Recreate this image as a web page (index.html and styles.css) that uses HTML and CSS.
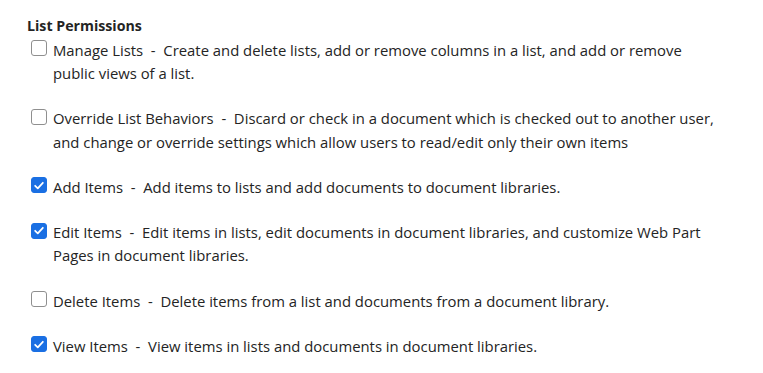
FILE: index.html
```html
<!DOCTYPE html>
<html lang="en">
<head>
<meta charset="utf-8">
<title>List Permissions</title>
<link rel="stylesheet" href="styles.css">
</head>
<body>
<section class="group">
  <h3 class="group-title">List Permissions</h3>
  <ul class="perm-list">
    <li class="perm">
      <span class="box"></span>
      <span class="perm-text">Manage Lists&nbsp; -&nbsp; Create and delete lists, add or remove columns in a list, and add or remove public views of a list.</span>
    </li>
    <li class="perm">
      <span class="box"></span>
      <span class="perm-text">Override List Behaviors&nbsp; -&nbsp; Discard or check in a document which is checked out to another user, and change or override settings which allow users to read/edit only their own items</span>
    </li>
    <li class="perm">
      <span class="box checked"><svg viewBox="0 0 16 16"><path d="M3.6 8.3 L6.6 11.2 L12.4 4.9"/></svg></span>
      <span class="perm-text">Add Items&nbsp; -&nbsp; Add items to lists and add documents to document libraries.</span>
    </li>
    <li class="perm">
      <span class="box checked"><svg viewBox="0 0 16 16"><path d="M3.6 8.3 L6.6 11.2 L12.4 4.9"/></svg></span>
      <span class="perm-text">Edit Items&nbsp; -&nbsp; Edit items in lists, edit documents in document libraries, and customize Web Part Pages in document libraries.</span>
    </li>
    <li class="perm">
      <span class="box"></span>
      <span class="perm-text">Delete Items&nbsp; -&nbsp; Delete items from a list and documents from a document library.</span>
    </li>
    <li class="perm">
      <span class="box checked"><svg viewBox="0 0 16 16"><path d="M3.6 8.3 L6.6 11.2 L12.4 4.9"/></svg></span>
      <span class="perm-text">View Items&nbsp; -&nbsp; View items in lists and documents in document libraries.</span>
    </li>
  </ul>
</section>
</body>
</html>
```
FILE: styles.css
```css
html, body {
  margin: 0;
  padding: 0;
  background: #ffffff;
}

body {
  font-family: "Open Sans", "Noto Sans", "Liberation Sans", sans-serif;
  font-size: 14.85px;
  line-height: 23.3px;
  color: #242424;
}

.group {
  padding: 14px 0 0 27px;
}

.group-title {
  margin: 0 0 1.7px 0;
  font-size: 14.2px;
  font-weight: 700;
  line-height: 23.3px;
  color: #242424;
}

.perm-list {
  list-style: none;
  margin: 0;
  padding: 0;
  display: flex;
  flex-direction: column;
  gap: 21.9px;
}

.perm {
  display: flex;
  align-items: flex-start;
  padding-left: 4px;
}

.box {
  flex: 0 0 auto;
  width: 16px;
  height: 16px;
  box-sizing: border-box;
  margin-top: 1.4px;
  margin-right: 6px;
  border: 1px solid #8f8f8f;
  border-radius: 3px;
  background: #ffffff;
  display: flex;
  align-items: center;
  justify-content: center;
}

.box.checked {
  border-color: #1a6fe3;
  background: #1a6fe3;
}

.box svg {
  width: 15px;
  height: 15px;
}

.box svg path {
  fill: none;
  stroke: #ffffff;
  stroke-width: 2;
  stroke-linecap: round;
  stroke-linejoin: round;
}

.perm-text {
  max-width: 668px;
}
```
